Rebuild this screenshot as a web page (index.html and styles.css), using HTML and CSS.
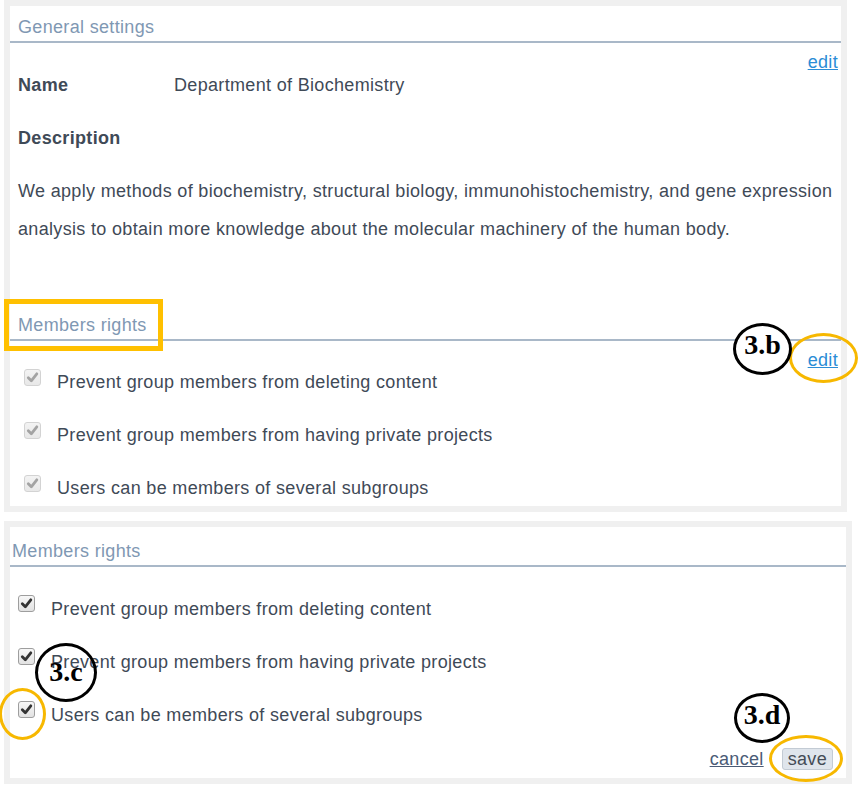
FILE: index.html
```html
<!DOCTYPE html>
<html>
<head>
<meta charset="utf-8">
<title>Group settings</title>
<link rel="stylesheet" href="styles.css">
</head>
<body>
<div class="panel panel-top">
  <div class="sec-head">General settings</div>
  <div class="edit-row"><a class="link" href="#">edit</a></div>
  <div class="field"><span class="field-label">Name</span><span class="field-value">Department of Biochemistry</span></div>
  <div class="desc-label">Description</div>
  <p class="desc">We apply methods of biochemistry, structural biology, immunohistochemistry, and gene expression analysis to obtain more knowledge about the molecular machinery of the human body.</p>
  <div class="sec-head sec-members">Members rights</div>
  <div class="edit-row edit-row-2"><a class="link" href="#">edit</a></div>
  <ul class="rights rights-disabled">
    <li><span class="cb"><svg viewBox="0 0 17 17" width="17" height="17"><path class="tick" d="M4.3 8.8 L7.3 11.8 L12.8 4.8"/></svg></span>Prevent group members from deleting content</li>
    <li><span class="cb"><svg viewBox="0 0 17 17" width="17" height="17"><path class="tick" d="M4.3 8.8 L7.3 11.8 L12.8 4.8"/></svg></span>Prevent group members from having private projects</li>
    <li><span class="cb"><svg viewBox="0 0 17 17" width="17" height="17"><path class="tick" d="M4.3 8.8 L7.3 11.8 L12.8 4.8"/></svg></span>Users can be members of several subgroups</li>
  </ul>
</div>

<div class="panel panel-bottom">
  <div class="sec-head">Members rights</div>
  <ul class="rights rights-active">
    <li><span class="cb"><svg viewBox="0 0 17 17" width="17" height="17"><path class="tick" d="M4.3 8.8 L7.3 11.8 L12.8 4.8"/></svg></span>Prevent group members from deleting content</li>
    <li><span class="cb"><svg viewBox="0 0 17 17" width="17" height="17"><path class="tick" d="M4.3 8.8 L7.3 11.8 L12.8 4.8"/></svg></span>Prevent group members from having private projects</li>
    <li><span class="cb"><svg viewBox="0 0 17 17" width="17" height="17"><path class="tick" d="M4.3 8.8 L7.3 11.8 L12.8 4.8"/></svg></span>Users can be members of several subgroups</li>
  </ul>
  <div class="actions"><a class="cancel" href="#">cancel</a><button class="save" type="button">save</button></div>
</div>

<div class="mark-box"></div>
<div class="ring ring-edit"></div>
<div class="ring ring-cb"></div>
<div class="ring ring-save"></div>
<div class="step step-b">3.b</div>
<div class="step step-c">3.c</div>
<div class="step step-d">3.d</div>
</body>
</html>
```

FILE: styles.css
```css
body {
  margin: 0;
  background: #ffffff;
  font-family: "Liberation Sans", Arial, sans-serif;
  font-size: 18px;
  letter-spacing: 0.33px;
  color: #3f4a57;
}

.panel {
  box-sizing: border-box;
  border: 6px solid #f0f0f0;
  margin-left: 4px;
  background: #ffffff;
}

.panel-top {
  width: 843px;
  height: 512px;
}

.panel-bottom {
  width: 848px;
  height: 263px;
  margin-top: 9px;
}

.sec-head {
  color: #7f98b3;
  line-height: 22px;
  padding: 10px 8px 3px;
  border-bottom: 2px solid #a9b8c8;
}

.panel-bottom .sec-head {
  padding: 13px 2px 3px;
}

.sec-members {
  margin-top: 56px;
}

.edit-row {
  display: flex;
  justify-content: flex-end;
  line-height: 22px;
  padding-right: 3px;
  margin-top: 8px;
}

.link {
  color: #2b8dd6;
  text-decoration: underline;
}

.field {
  display: flex;
  line-height: 22px;
  padding-left: 8px;
  margin-top: 1px;
}

.field-label {
  font-weight: bold;
  width: 156px;
}

.desc-label {
  font-weight: bold;
  line-height: 22px;
  padding-left: 8px;
  margin-top: 31px;
}

.desc {
  margin: 23px 0 0;
  padding-left: 8px;
  line-height: 38px;
}

.rights {
  list-style: none;
  margin: 0;
  padding: 0;
}

.rights li {
  display: flex;
  align-items: flex-start;
  line-height: 22px;
}

.rights li + li {
  margin-top: 31px;
}

.rights-disabled {
  padding-left: 14px;
}

.rights-active {
  padding-left: 8px;
  margin-top: 31px;
}

.cb {
  box-sizing: border-box;
  width: 17px;
  height: 17px;
  margin-top: -2px;
  margin-right: 16px;
  border: 1px solid #bdbdbd;
  border-radius: 3px;
  background: linear-gradient(#f7f7f7, #e2e2e2);
  flex: none;
  display: flex;
}

.cb svg {
  margin: -1px;
}

.tick {
  fill: none;
  stroke-width: 2.8;
  stroke-linecap: round;
  stroke-linejoin: round;
}

.rights-disabled .tick {
  stroke: #a3a3a3;
}

.rights-disabled .cb {
  border-color: #d3d3d3;
  background: linear-gradient(#f3f3f3, #e8e8e8);
}

.rights-active .tick {
  stroke: #333333;
}

.rights-active .cb {
  margin-top: -3px;
  border-color: #9e9e9e;
}

.actions {
  display: flex;
  justify-content: flex-end;
  align-items: center;
  gap: 18px;
  height: 22px;
  margin-top: 22px;
  padding-right: 13px;
}

.cancel {
  color: #4a5b76;
  text-decoration: underline;
  line-height: 22px;
}

.save {
  box-sizing: border-box;
  height: 22px;
  padding: 0 5px;
  border: 1px solid #c3cbd4;
  border-radius: 3px;
  background: #dfe5ec;
  font-family: "Liberation Sans", Arial, sans-serif;
  font-size: 18px;
  letter-spacing: 0.33px;
  line-height: 20px;
  color: #444c56;
}

/* annotations laid over the screenshot */
.mark-box {
  position: absolute;
  box-sizing: border-box;
  left: 4px;
  top: 299px;
  width: 159px;
  height: 52px;
  border: 5px solid #ffc000;
}

.ring {
  position: absolute;
  box-sizing: border-box;
  border: 3px solid #f7b800;
  border-radius: 50%;
}

.ring-edit {
  left: 789px;
  top: 333px;
  width: 69px;
  height: 50px;
}

.ring-cb {
  left: -1px;
  top: 688px;
  width: 47px;
  height: 52px;
}

.ring-save {
  left: 769px;
  top: 735px;
  width: 74px;
  height: 47px;
}

.step {
  position: absolute;
  box-sizing: border-box;
  display: flex;
  align-items: center;
  justify-content: center;
  border: 3px solid #000000;
  border-radius: 50%;
  font-family: "Liberation Serif", "Times New Roman", serif;
  font-weight: bold;
  font-size: 28px;
  letter-spacing: 0;
  color: #000000;
  padding-bottom: 4px;
}

.step-b {
  left: 733px;
  top: 323px;
  width: 59px;
  height: 52px;
  background: #ffffff;
  padding-bottom: 8px;
}

.step-c {
  left: 35px;
  top: 643px;
  width: 62px;
  height: 59px;
  padding-bottom: 2px;
}

.step-d {
  left: 734px;
  top: 693px;
  width: 56px;
  height: 50px;
  padding-bottom: 6px;
}
```
